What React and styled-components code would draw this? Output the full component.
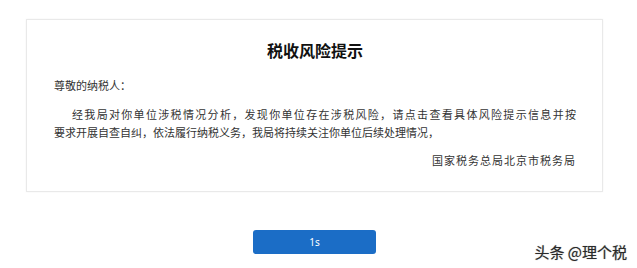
import React from "react";
import styled, { createGlobalStyle } from "styled-components";

const Global = createGlobalStyle`
  html, body { margin: 0; padding: 0; background: #fff; }
  body { font-family: "Noto Sans CJK SC", "Noto Sans", sans-serif; color: #333; }
`;

const Page = styled.div`
  position: relative;
  width: 637px;
  height: 268px;
  box-sizing: border-box;
  padding: 19px 0 0 26px;
  display: flex;
  flex-direction: column;
  overflow: hidden;
`;

const Column = styled.div`
  width: 577px;
  display: flex;
  flex-direction: column;
  align-items: center;
`;

const Card = styled.section`
  width: 100%;
  box-sizing: border-box;
  border: 1px solid #e9e9e9;
  box-shadow: 0 0 2px rgba(0, 0, 0, 0.05);
  background: #fff;
  padding: 19px 26px 22px 27px;
  display: flex;
  flex-direction: column;
`;

const Title = styled.h1`
  margin: 0 0 15px;
  font-size: 16px;
  line-height: 22px;
  font-weight: 600;
  color: #111;
  text-align: center;
  letter-spacing: 0;
`;

const Text = styled.p`
  margin: 0 0 ${(p) => p.$gap || 0}px;
  font-size: 11px;
  line-height: 18px;
  color: #333;
  text-align: ${(p) => p.$align || "left"};
  letter-spacing: ${(p) => p.$spacing || 0}px;
`;

const Line = styled.span`
  display: block;
  text-indent: ${(p) => p.$indent || 0}px;
  text-align: ${(p) => (p.$justify ? "justify" : "left")};
  text-align-last: ${(p) => (p.$justify ? "justify" : "auto")};
`;

const Button = styled.button`
  margin-top: 38px;
  width: 123px;
  height: 24px;
  border: none;
  border-radius: 3px;
  background: #1b6dc6;
  color: #fff;
  font-family: "Noto Sans", "Noto Sans CJK SC", sans-serif;
  font-size: 10px;
  line-height: 24px;
  padding: 0;
`;

const Watermark = styled.div`
  position: absolute;
  right: 10px;
  bottom: 6px;
  font-size: 15px;
  line-height: 20px;
  color: #2a2a2a;
  text-shadow: 0 0 1px #888, 1px 1px 0 #fff;
  font-family: "Noto Sans CJK SC", sans-serif;
`;

export default function App() {
  return (
    <>
      <Global />
      <Page>
        <Column>
          <Card>
            <Title>税收风险提示</Title>
            <Text $gap={11}>尊敬的纳税人：</Text>
            <Text $gap={10}>
              <Line $indent={18} $justify>
                经我局对你单位涉税情况分析，发现你单位存在涉税风险，请点击查看具体风险提示信息并按
              </Line>
              <Line>要求开展自查自纠，依法履行纳税义务，我局将持续关注你单位后续处理情况，</Line>
            </Text>
            <Text $align="right" $spacing={1}>国家税务总局北京市税务局</Text>
          </Card>
          <Button>1s</Button>
        </Column>
        <Watermark>头条 @理个税</Watermark>
      </Page>
    </>
  );
}
